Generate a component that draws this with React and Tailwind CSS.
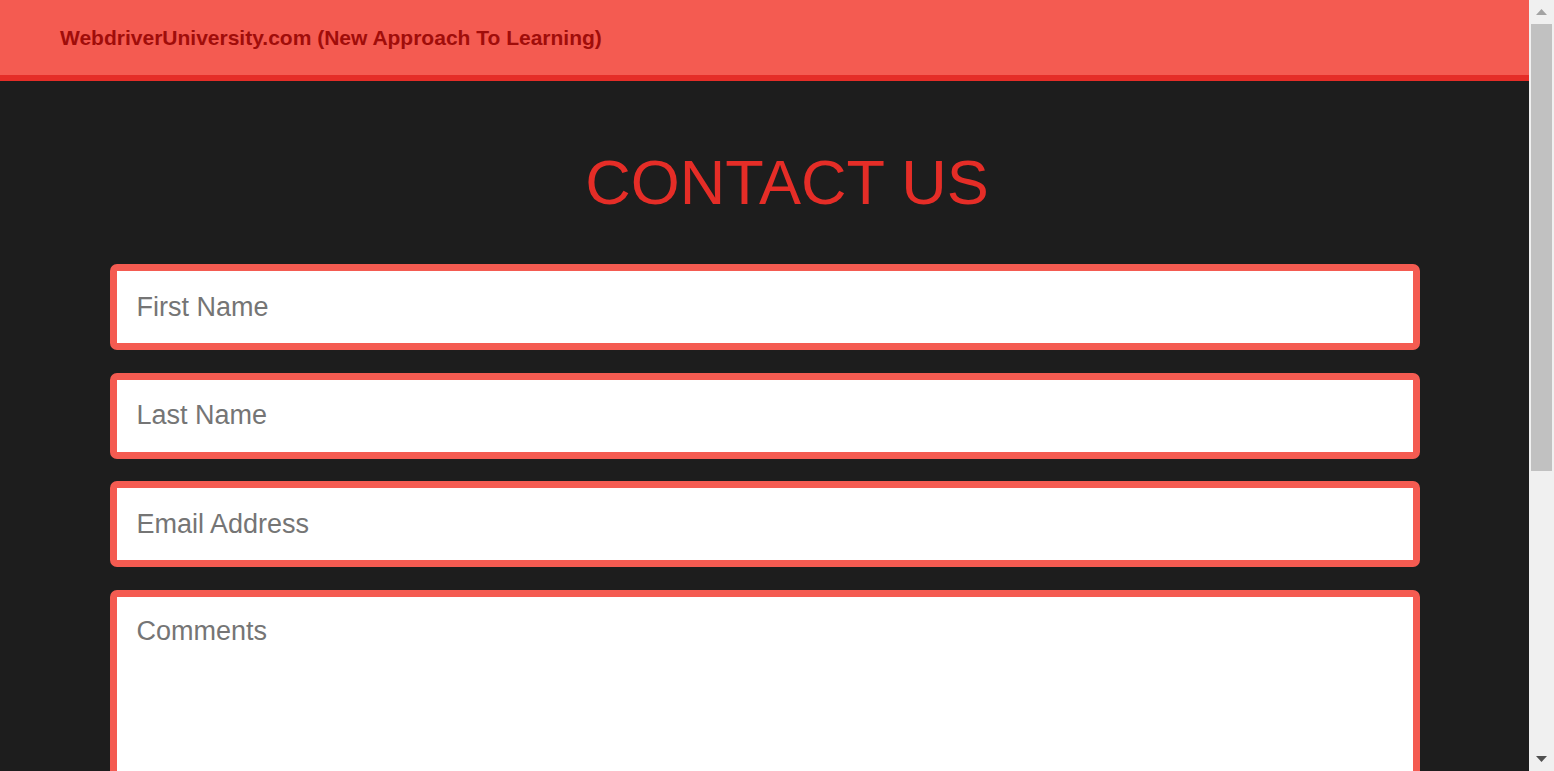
import React from 'react';

const fieldClass =
  "block w-full h-[86px] bg-white border-[7px] border-[#f45b51] rounded-[7px] pl-[20px] text-[27px] text-[#333] placeholder:text-[#757575] outline-none";

const ScrollArrow = ({ up, color }) => (
  <div className="h-[24px] flex items-center justify-center">
    <svg width="11" height="6" viewBox="0 0 11 6">
      <polygon points={up ? "0,6 5.5,0 11,6" : "0,0 11,0 5.5,6"} fill={color} />
    </svg>
  </div>
);

const App = () => {
  return (
    <div className="flex h-screen w-full overflow-hidden font-['Liberation_Sans',Arial,sans-serif]">
      {/* page */}
      <div className="flex-1 min-w-0 bg-[#1d1d1d] overflow-hidden">
        <div className="h-[81px] bg-[#f45b51] border-b-[6px] border-[#e52d27] flex items-center pl-[60px]">
          <span className="text-[21px] font-bold text-[#a00d0a]">
            WebdriverUniversity.com (New Approach To Learning)
          </span>
        </div>

        <h1 className="mt-[65px] pl-[45px] text-center text-[63px] leading-[72px] font-normal text-[#e52d27]">
          CONTACT US
        </h1>

        <form className="w-[1310px] mx-auto mt-[46px] flex flex-col gap-[22.7px]">
          <input type="text" placeholder="First Name" className={fieldClass} />
          <input type="text" placeholder="Last Name" className={fieldClass} />
          <input type="email" placeholder="Email Address" className={fieldClass} />
          <textarea
            placeholder="Comments"
            className="block w-full h-[220px] bg-white border-[7px] border-[#f45b51] rounded-[7px] pl-[20px] pt-[14px] text-[27px] text-[#333] placeholder:text-[#757575] outline-none resize-none"
          />
        </form>
      </div>

      {/* browser scrollbar */}
      <div className="w-[25px] shrink-0 bg-[#f0f0f0] flex flex-col">
        <ScrollArrow up color="#a3a3a3" />
        <div className="mx-[2px] h-[447px] bg-[#c1c1c1]" />
        <div className="flex-1" />
        <ScrollArrow color="#505050" />
      </div>
    </div>
  );
};

export default App;
